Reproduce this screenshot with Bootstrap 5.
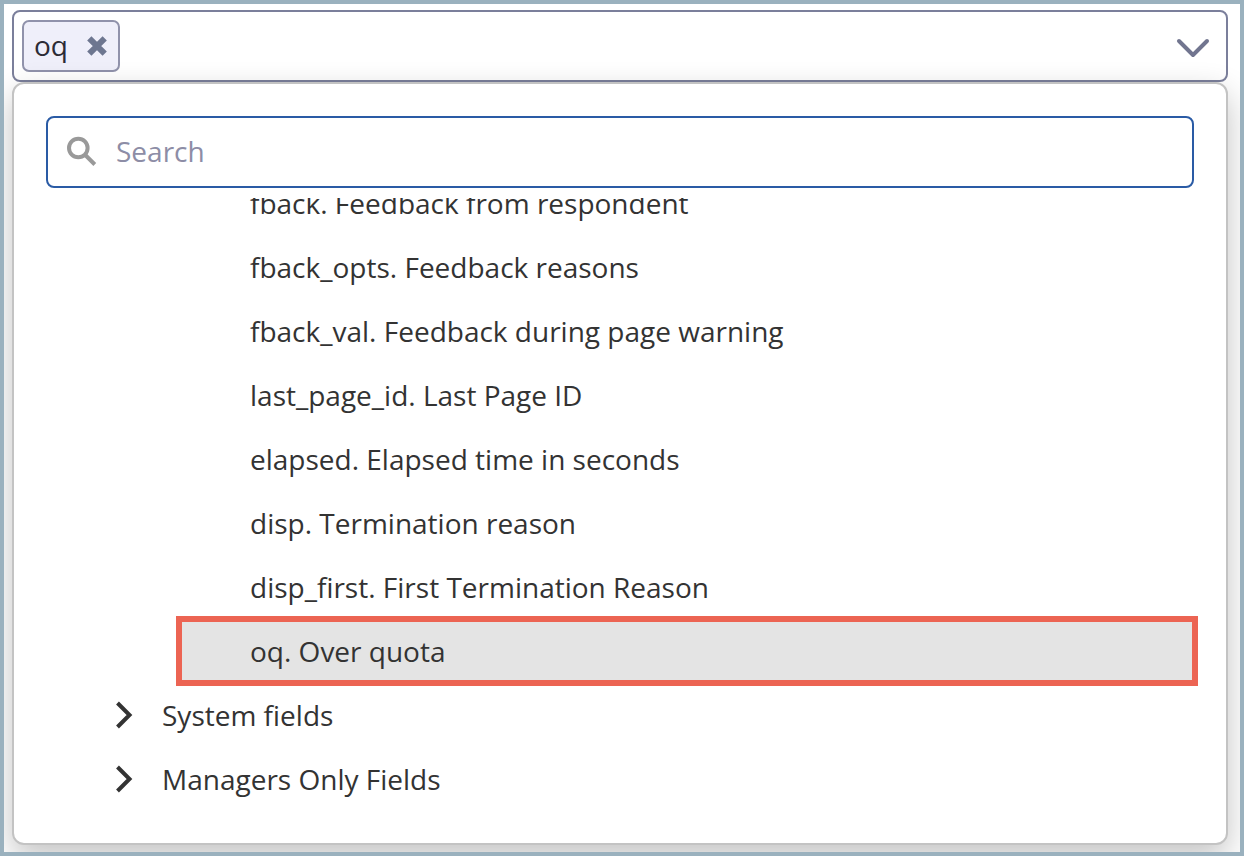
<!DOCTYPE html>
<html lang="en">
<head>
<meta charset="utf-8">
<meta name="viewport" content="width=device-width, initial-scale=1">
<title>Field picker</title>
<link href="https://cdn.jsdelivr.net/npm/bootstrap@5.3.0/dist/css/bootstrap.min.css" rel="stylesheet">
<style>
  body { font-family: "Open Sans", "Noto Sans", sans-serif; font-size: 28px; line-height: 40px; color: #333; }
  .frame { min-height: 100vh; border: 4px solid #9ab1be; padding: 6px 12px 7px 8px; }
  .picker { border: 2px solid #7b7f9b; border-radius: 8px; padding: 8px 16px 8px 8px; }
  .chip { height: 52px; border: 2px solid #9092ab; border-radius: 7px; background: #efeffa; color: #2b2b36; padding: 0 10px 2px; gap: 18px; }
  .panel { border: 2px solid #c3c3c3; border-radius: 12px; padding: 32px 28px 32px 32px; box-shadow: 0 12px 32px rgba(0, 0, 0, .24); }
  .search { height: 72px; border: 2px solid #2a5ba5; border-radius: 8px; padding: 0 18px 2px; gap: 18px; margin-right: 4px; }
  .search input { font-size: 28px; line-height: 40px; color: #333; outline: 0; }
  .search input::placeholder { color: #8d8da6; opacity: 1; }
  .fields { margin-top: 10px; overflow: hidden; }
  .tree-row { height: 64px; }
  .leaf { margin-left: 130px; padding-left: 74px; }
  .branch { padding-left: 68px; gap: 28px; }
  /* the list is scrolled so that its first row is partly hidden */
  .scrolled-row { margin-top: -27px; }
  .picked { height: 70px; margin-top: -3px; margin-bottom: -3px; padding-left: 68px; border: 6px solid #ec6453; background: #e4e4e4; }
  svg { display: block; flex: none; }
</style>
</head>
<body>
<main class="frame overflow-hidden">
  <div class="picker bg-white d-flex align-items-center justify-content-between">
    <span class="chip d-inline-flex align-items-center">oq
      <button type="button" class="btn d-flex p-0 border-0" aria-label="Remove oq">
        <svg width="22" height="24" viewBox="0 0 22 24"><path d="M3.300 5.300 18.700 20.700M18.700 5.300 3.300 20.700" stroke="#6d7690" stroke-width="6"/></svg>
      </button>
    </span>
    <button type="button" class="btn d-flex p-0 border-0" aria-label="Toggle list" aria-expanded="true">
      <svg width="34" height="24" viewBox="0 0 34 24"><path d="M3 7 17 21 31 7" fill="none" stroke="#71758f" stroke-width="4" stroke-linecap="round" stroke-linejoin="round"/></svg>
    </button>
  </div>
  <div class="panel bg-white position-relative">
    <label class="search d-flex align-items-center">
      <svg width="32" height="32" viewBox="0 0 32 32" fill="none" stroke="#999" stroke-width="4"><circle cx="12.300" cy="13" r="9.300"/><path d="M18.800 19.500 28.800 29.500"/></svg>
      <input type="text" class="border-0 bg-transparent p-0 flex-grow-1" placeholder="Search" aria-label="Search">
    </label>
    <ul class="fields list-unstyled mb-0">
      <li class="tree-row leaf scrolled-row d-flex align-items-center">fback. Feedback from respondent</li>
      <li class="tree-row leaf d-flex align-items-center">fback_opts. Feedback reasons</li>
      <li class="tree-row leaf d-flex align-items-center">fback_val. Feedback during page warning</li>
      <li class="tree-row leaf d-flex align-items-center">last_page_id. Last Page ID</li>
      <li class="tree-row leaf d-flex align-items-center">elapsed. Elapsed time in seconds</li>
      <li class="tree-row leaf d-flex align-items-center">disp. Termination reason</li>
      <li class="tree-row leaf d-flex align-items-center">disp_first. First Termination Reason</li>
      <li class="tree-row leaf picked d-flex align-items-center">oq. Over quota</li>
      <li class="tree-row branch d-flex align-items-center">
        <svg width="20" height="28" viewBox="0 0 20 28"><path d="M3.500 2 15.500 14 3.500 26" fill="none" stroke="#333" stroke-width="4"/></svg>System fields</li>
      <li class="tree-row branch d-flex align-items-center">
        <svg width="20" height="28" viewBox="0 0 20 28"><path d="M3.500 2 15.500 14 3.500 26" fill="none" stroke="#333" stroke-width="4"/></svg>Managers Only Fields</li>
    </ul>
  </div>
</main>
<script src="https://cdn.jsdelivr.net/npm/bootstrap@5.3.0/dist/js/bootstrap.bundle.min.js"></script>
</body>
</html>
